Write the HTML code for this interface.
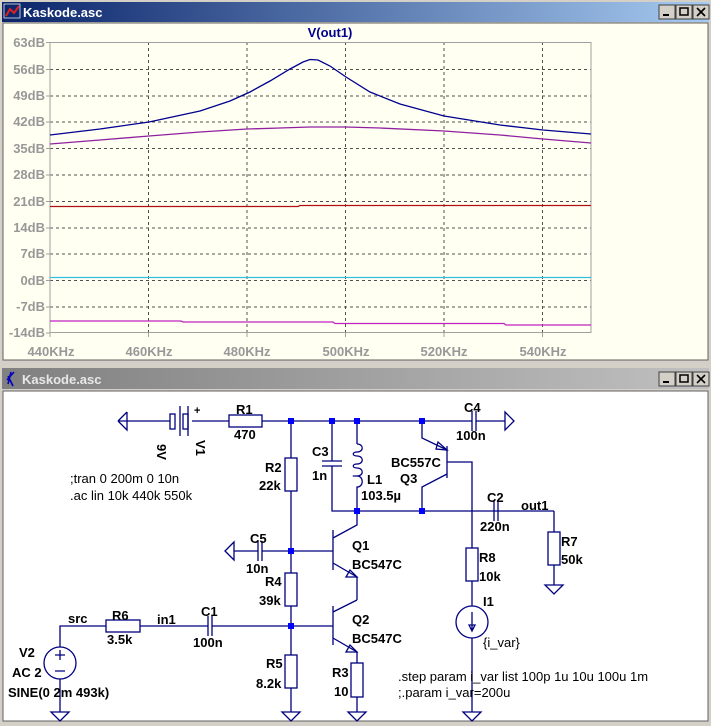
<!DOCTYPE html>
<html><head><meta charset="utf-8"><style>
html,body{margin:0;padding:0;background:#d4d0c8;}
svg{display:block;}
text{font-family:"Liberation Sans",sans-serif;}
.l{font-size:13px;font-weight:bold;fill:#000;}
.ax{font-size:13px;font-weight:bold;fill:#989898;}
.w{stroke:#000080;stroke-width:1.3;fill:none;}
</style></head><body>
<svg width="711" height="726" viewBox="0 0 711 726" xmlns="http://www.w3.org/2000/svg">
<defs>
<linearGradient id="tb" x1="0" x2="1"><stop offset="0" stop-color="#0a246a"/><stop offset="1" stop-color="#a6caf0"/></linearGradient>
<linearGradient id="tg" x1="0" x2="1"><stop offset="0" stop-color="#808080"/><stop offset="1" stop-color="#c0c0c0"/></linearGradient>
</defs>
<rect x="0" y="0" width="711" height="364" fill="#d4d0c8"/>
<rect x="2" y="2" width="707" height="20" fill="url(#tb)"/>
<polyline points="6,16 10,9 14,13 19,6" stroke="#e02020" stroke-width="2" fill="none"/>
<rect x="4" y="4" width="16" height="14" fill="none" stroke="#fff" stroke-width="0.7"/>
<text x="23" y="17" font-size="13" font-weight="bold" fill="#fff">Kaskode.asc</text>
<g>
<rect x="659" y="5" width="16" height="14" fill="#d4d0c8" stroke="#404040"/><rect x="663" y="14" width="6" height="2" fill="#000"/>
<rect x="676" y="5" width="16" height="14" fill="#d4d0c8" stroke="#404040"/><rect x="680" y="8" width="8" height="7" fill="none" stroke="#000" stroke-width="1.5"/>
<rect x="693" y="5" width="16" height="14" fill="#d4d0c8" stroke="#404040"/><path d="M697 8 L705 16 M705 8 L697 16" stroke="#000" stroke-width="1.6"/>
</g>
<rect x="3" y="23" width="705" height="337" fill="#fffff2" stroke="#606060"/>
<text x="330" y="37" font-size="13" font-weight="bold" fill="#000090" text-anchor="middle">V(out1)</text>
<g stroke="#505050" stroke-dasharray="3,3" stroke-width="1">
<path d="M50 69.5H591M50 96H591M50 122H591M50 148.5H591M50 175H591M50 201.5H591M50 228H591M50 254H591M50 280.5H591M50 307H591"/>
<path d="M148.5 42V332M247 42V332M345.5 42V332M444 42V332M542.5 42V332"/>
</g>
<rect x="50" y="42.5" width="541" height="290" fill="none" stroke="#a0a0a0"/>
<g stroke="#a0a0a0"><path d="M46 42.5H50M46 69.5H50M46 96H50M46 122H50M46 148.5H50M46 175H50M46 201.5H50M46 228H50M46 254H50M46 280.5H50M46 307H50M46 333H50M50 333v4M148.5 333v4M247 333v4M345.5 333v4M444 333v4M542.5 333v4"/></g>
<g class="ax" text-anchor="end">
<text x="45" y="47">63dB</text><text x="45" y="74">56dB</text><text x="45" y="100">49dB</text><text x="45" y="126">42dB</text><text x="45" y="153">35dB</text><text x="45" y="179">28dB</text><text x="45" y="206">21dB</text><text x="45" y="232">14dB</text><text x="45" y="258">7dB</text><text x="45" y="285">0dB</text><text x="45" y="311">-7dB</text><text x="45" y="337">-14dB</text>
</g>
<g class="ax" text-anchor="middle">
<text x="51" y="356">440KHz</text><text x="149" y="356">460KHz</text><text x="247" y="356">480KHz</text><text x="346" y="356">500KHz</text><text x="444" y="356">520KHz</text><text x="543" y="356">540KHz</text>
</g>
<polyline fill="none" stroke="#000090" stroke-width="1.3" points="50,135 100,129 149,122 200,111 230,101 250,92 270,81 290,69 303,62 310,59.5 318,60 330,66 346,77 370,92 400,104 444,116 500,125 543,130 591,134"/>
<polyline fill="none" stroke="#9020a0" stroke-width="1.3" points="50,144 100,140 149,136 200,132 247,129 280,128 310,127 346,127 380,128 444,131 500,135 543,139 591,143"/>
<polyline fill="none" stroke="#b01010" stroke-width="1.3" points="50,206.5 298,206.5 300,205.5 591,205.5"/>
<line x1="50" y1="277.5" x2="591" y2="277.5" stroke="#30c0e0" stroke-width="1.3"/>
<polyline fill="none" stroke="#c020c0" stroke-width="1.3" points="50,321 181,321 183,322 333,322 335,323.5 504,323.5 506,325 591,325"/>
<rect x="0" y="364" width="711" height="362" fill="#d4d0c8"/>
<rect x="2" y="368" width="707" height="21" fill="url(#tg)"/>
<path d="M7 380 L14 372 M8 376 L13 386 M11 372 L8 384" stroke="#0000c0" stroke-width="1.6" fill="none"/>
<text x="22" y="384" font-size="13" font-weight="bold" fill="#e8e8e8">Kaskode.asc</text>
<g>
<rect x="659" y="372" width="16" height="14" fill="#d4d0c8" stroke="#404040"/><rect x="663" y="381" width="6" height="2" fill="#000"/>
<rect x="676" y="372" width="16" height="14" fill="#d4d0c8" stroke="#404040"/><rect x="680" y="375" width="8" height="7" fill="none" stroke="#000" stroke-width="1.5"/>
<rect x="693" y="372" width="16" height="14" fill="#d4d0c8" stroke="#404040"/><path d="M697 375 L705 383 M705 375 L697 383" stroke="#000" stroke-width="1.6"/>
</g>
<rect x="3" y="391" width="705" height="330" fill="#fff" stroke="#606060"/>
<g class="w">
<path d="M118 421 L127 412 M118 421 L127 430 L127 412"/>
<path d="M118 421H170M192 421H229M262 421H472M476 421H505"/>
<path d="M505 412 L505 430 L514 421 Z"/>
<rect x="170" y="414" width="5" height="15"/><path d="M180 406V436M188 406V436"/><rect x="183" y="414" width="5" height="15"/>
<rect x="229" y="415" width="33" height="12"/>
<path d="M472 411V431M476 411V431"/>
<path d="M291 421V458M291 491V573M291 606V655M291 688V712"/>
<rect x="285" y="458" width="12" height="33"/><rect x="285" y="573" width="12" height="33"/><rect x="285" y="655" width="12" height="33"/>
<path d="M282 712H300L291 721Z"/>
<path d="M332 421V461M332 466V511H554M322 461H342M322 466H342"/>
<path d="M357 421V444 M357 444 C364 444 364 452 357 452 C352 452 352 456 357 456 C364 456 364 464 357 464 C352 464 352 468 357 468 C364 468 364 476 357 476 C352 476 352 476 357 476 M357 476 C364 476 364 487 357 487 V511"/>
<path d="M422 421V438L447 450M447 446V478M447 462H472V548M447 474L422 487V511"/>
<path d="M447 450 L438 442 L436 449 Z"/>
<rect x="466" y="548" width="12" height="33"/>
<path d="M472 581V606M472 638V712M463 712H481L472 721Z"/>
<circle cx="472" cy="622" r="16"/>
<path d="M472 612V630M469 625L472 631L475 625Z"/>
<path d="M494 501V521M498 501V521"/>
<path d="M554 511V532M554 565V585M545 585H563L554 594Z"/>
<rect x="548" y="532" width="12" height="33"/>
<path d="M357 511V525L333 538M333 530V570M291 551H333M333 563L357 577V600"/>
<path d="M357 577 L346 577 L350 570 Z"/>
<path d="M357 600L333 612M333 606V645M291 626H333M333 638L357 652V663M357 697V712M348 712H366L357 721Z"/>
<path d="M357 652 L346 652 L350 645 Z"/>
<rect x="351" y="663" width="12" height="34"/>
<path d="M225 551L234 542V560Z M234 551H258M262 551H291M258 541V561M262 541V561"/>
<path d="M60 647V626H106M140 626H208M212 626H291M208 616V636M212 616V636"/>
<rect x="106" y="620" width="34" height="12"/>
<circle cx="60" cy="663" r="16"/>
<path d="M55 655H65M60 650V660M55 671H65"/>
<path d="M60 679V712M51 712H69L60 721Z"/>
</g>
<g fill="#0000ff">
<rect x="288" y="418" width="6" height="6"/><rect x="329" y="418" width="6" height="6"/><rect x="354" y="418" width="6" height="6"/><rect x="419" y="418" width="6" height="6"/>
<rect x="354" y="508" width="6" height="6"/><rect x="419" y="508" width="6" height="6"/>
<rect x="288" y="548" width="6" height="6"/><rect x="288" y="623" width="6" height="6"/>
</g>
<text x="194" y="414" font-size="11" font-weight="bold">+</text>
<g class="l">
<text x="236" y="414">R1</text><text x="234" y="439">470</text>
<text x="157" y="444" transform="rotate(90 157 444)">9V</text>
<text x="196" y="440" transform="rotate(90 196 440)">V1</text>
<text x="70" y="483" font-weight="normal">;tran 0 200m 0 10n</text>
<text x="70" y="500" font-weight="normal">.ac lin 10k 440k 550k</text>
<text x="265" y="472">R2</text><text x="259" y="490">22k</text>
<text x="312" y="456">C3</text><text x="312" y="480">1n</text>
<text x="367" y="484">L1</text><text x="361" y="500">103.5µ</text>
<text x="391" y="467">BC557C</text><text x="400" y="483">Q3</text>
<text x="464" y="412">C4</text><text x="456" y="440">100n</text>
<text x="487" y="502">C2</text><text x="480" y="531">220n</text>
<text x="521" y="510">out1</text>
<text x="561" y="546">R7</text><text x="561" y="564">50k</text>
<text x="479" y="562">R8</text><text x="479" y="581">10k</text>
<text x="483" y="606">I1</text><text x="483" y="647" font-weight="normal">{i_var}</text>
<text x="250" y="543">C5</text><text x="246" y="573">10n</text>
<text x="352" y="550">Q1</text><text x="352" y="569">BC547C</text>
<text x="265" y="586">R4</text><text x="259" y="605">39k</text>
<text x="352" y="624">Q2</text><text x="352" y="643">BC547C</text>
<text x="266" y="668">R5</text><text x="256" y="688">8.2k</text>
<text x="332" y="677">R3</text><text x="334" y="696">10</text>
<text x="112" y="620">R6</text><text x="107" y="644">3.5k</text>
<text x="157" y="624">in1</text>
<text x="201" y="616">C1</text><text x="193" y="647">100n</text>
<text x="68" y="623">src</text>
<text x="19" y="657">V2</text><text x="12" y="677">AC 2</text>
<text x="8" y="697">SINE(0 2m 493k)</text>
<text x="398" y="681" font-weight="normal">.step param i_var list 100p 1u 10u 100u 1m</text>
<text x="398" y="697" font-weight="normal">;.param i_var=200u</text>
</g>
</svg>
</body></html>
